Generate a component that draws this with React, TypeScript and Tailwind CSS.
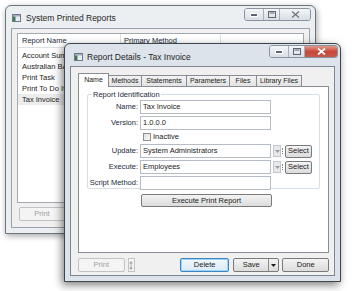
import React from "react";

const FONT = "font-['Liberation_Sans',Arial,sans-serif]";

function WinIcon() {
  return (
    <svg width="9" height="8" viewBox="0 0 9 8" className="shrink-0">
      <rect x="0.5" y="0.5" width="8" height="7" fill="#e9eef3" stroke="#6f7884" />
      <rect x="1" y="1" width="7" height="1.5" fill="#9fb0c2" />
      <rect x="1" y="2.5" width="2.5" height="4.5" fill="#3f7a5f" />
    </svg>
  );
}

function CaptionButtons({ active }: { active: boolean }) {
  return (
    <div className="flex h-[13px] rounded-[3px] border border-[#8a939e] overflow-hidden">
      <div className="w-[19px] flex items-center justify-center border-r border-[#a7afb9] bg-gradient-to-b from-[#f4f6f8] to-[#d8dee5]">
        <svg width="8" height="4" viewBox="0 0 8 4">
          <rect x="0.5" y="0.5" width="7" height="3" fill="#5d6573" stroke="#ffffff" />
        </svg>
      </div>
      <div className="w-[16px] flex items-center justify-center border-r border-[#a7afb9] bg-gradient-to-b from-[#f4f6f8] to-[#d8dee5]">
        <svg width="8" height="7" viewBox="0 0 8 7">
          <rect x="0.5" y="0.5" width="7" height="6" fill="none" stroke="#5d6573" />
          <rect x="1.5" y="1.5" width="5" height="1" fill="#5d6573" />
        </svg>
      </div>
      <div
        className={
          active
            ? "w-[32px] flex items-center justify-center bg-gradient-to-b from-[#e29a8c] via-[#c8473a] to-[#c2584a]"
            : "w-[30px] flex items-center justify-center bg-gradient-to-b from-[#f4f6f8] to-[#d8dee5]"
        }>
        <svg width="9" height="7" viewBox="0 0 9 7">
          <path
            d="M1 0.5 L8 6.5 M8 0.5 L1 6.5"
            stroke={active ? "#ffffff" : "#6d7583"}
            strokeWidth={active ? 1.8 : 1.2}
          />
        </svg>
      </div>
    </div>
  );
}

function Btn({
  children,
  className = "",
  disabled,
  focused,
}: {
  children: React.ReactNode;
  className?: string;
  disabled?: boolean;
  focused?: boolean;
}) {
  const base = "flex items-center justify-center rounded-[2px] border text-[7.5px] leading-none whitespace-nowrap";
  const look = disabled
    ? "border-[#c2c2c2] bg-[#f4f4f4] text-[#a0a0a0]"
    : focused
      ? "border-[#3c86c6] bg-gradient-to-b from-[#f2f8fd] to-[#d9eaf7] text-[#1b1b1b] shadow-[inset_0_0_0_1px_#9fd3f3]"
      : "border-[#7a7a7a] bg-gradient-to-b from-[#f3f3f3] to-[#dcdcdc] text-[#1b1b1b]";
  return <div className={`${base} ${look} ${className}`}>{children}</div>;
}

function Field({ value }: { value?: string }) {
  return (
    <div className="w-[131px] h-[14px] border border-[#b6bcc6] bg-white flex items-center px-[2px] text-[7.5px] text-[#1b1b1b]">
      {value}
    </div>
  );
}

function Label({ text }: { text: string }) {
  return <div className="w-[52px] pr-[2px] text-right text-[7.5px] text-[#1b2a3c] whitespace-nowrap">{text}</div>;
}

function PickRow({ label, value }: { label: string; value: string }) {
  return (
    <div className="flex items-center">
      <Label text={label} />
      <Field value={value} />
      <div className="ml-[2px] w-[8px] h-[12px] border border-[#c4c7cc] bg-[#e7e9ec] flex items-center justify-center">
        <svg width="5" height="3" viewBox="0 0 5 3">
          <path d="M0 0 L5 0 L2.5 3 Z" fill="#9a9ea5" />
        </svg>
      </div>
      <div className="mx-[1px] w-[1px] h-[6px] border-l border-dotted border-[#8a8a8a]" />
      <Btn className="ml-[1px] w-[27px] h-[13px]">Select</Btn>
    </div>
  );
}

function BackWindow() {
  const rows = ["Account Summary", "Australian BAS", "Print Task", "Print To Do Item", "Tax Invoice"];
  return (
    <div className="absolute left-[5px] top-[5px] w-[311px] h-[229px] rounded-t-[6px] border border-[#6e757e] bg-[#eceff2] shadow-[1px_2px_6px_rgba(0,0,0,0.35)] flex flex-col">
      <div className="h-[22px] flex items-start pl-[6px] pr-[4px]">
        <div className="flex items-center gap-[5px] pt-[6px]">
          <WinIcon />
          <span className="text-[8.5px] text-[#1e1e1e]">System Printed Reports</span>
        </div>
        <div className="ml-auto pt-[2px]">
          <CaptionButtons active={false} />
        </div>
      </div>
      <div className="mx-[5px] mb-[5px] flex-1 border border-[#9aa2ab] bg-[#f0f0f0] flex flex-col px-[5px] pt-[4px]">
        <div className="h-[170px] border border-[#a3a9b1] bg-white flex flex-col">
          <div className="flex h-[14px] items-center border-b border-[#dcdfe3] text-[7.5px] text-[#1b2a3c]">
            <div className="w-[103px] h-full flex items-center pl-[4px] border-r border-[#dcdfe3]">Report Name</div>
            <div className="w-[100px] h-full flex items-center pl-[3px] border-r border-[#dcdfe3]">Primary Method</div>
            <div className="flex-1" />
          </div>
          <div className="pt-[2px] flex flex-col">
            {rows.map((r) => (
              <div
                key={r}
                className={`h-[11px] flex items-center pl-[4px] text-[7.5px] text-[#1b1b1b] ${r === "Tax Invoice" ? "bg-[#ececec]" : ""}`}>
                {r}
              </div>
            ))}
          </div>
        </div>
        <div className="mt-[4px] pl-[2px]">
          <Btn disabled className="w-[46px] h-[14px]">Print</Btn>
        </div>
      </div>
    </div>
  );
}

function FrontWindow() {
  const tabs: [string, string][] = [
    ["Name", "w-[31px]"],
    ["Methods", "w-[34px]"],
    ["Statements", "w-[46px]"],
    ["Parameters", "w-[44px]"],
    ["Files", "w-[28px]"],
    ["Library Files", "w-[46px]"],
  ];
  return (
    <div className="absolute left-[64px] top-[43px] w-[277px] h-[239px] rounded-t-[6px] border border-[#3f454d] bg-[#dde3ea] shadow-[-2px_3px_8px_rgba(0,0,0,0.5)] flex flex-col">
      <div className="h-[22px] flex items-start pl-[9px] pr-[2px]">
        <div className="flex items-center gap-[4px] pt-[7px]">
          <WinIcon />
          <span className="text-[8.5px] text-[#1e1e1e]">Report Details - Tax Invoice</span>
        </div>
        <div className="ml-auto pt-[1px]">
          <CaptionButtons active />
        </div>
      </div>
      <div className="mx-[5px] mb-[5px] flex-1 border border-[#7e8791] bg-[#f0f0f0] flex flex-col pl-[7px] pr-[5px] pt-[5px]">
        <div className="flex items-end h-[14px]">
          {tabs.map(([t, w]) =>
            t === "Name" ? (
              <div
                key={t}
                className={`${w} h-[14px] -mb-[1px] z-10 flex items-center justify-center border border-b-0 border-[#898c95] bg-white text-[7px] text-[#1b1b1b] whitespace-nowrap`}>
                {t}
              </div>
            ) : (
              <div
                key={t}
                className={`${w} h-[11px] -ml-[1px] flex items-center justify-center border border-b-0 border-[#898c95] bg-gradient-to-b from-[#f2f2f2] to-[#e3e3e3] text-[7px] text-[#1b1b1b] whitespace-nowrap overflow-hidden`}>
                {t}
              </div>
            ),
          )}
        </div>
        <div className="h-[167px] border border-[#898c95] bg-white flex flex-col px-[8px] pt-[7px]">
          <div className="relative border border-[#d5dfe5] rounded-[2px] h-[95px] pt-[5px] flex flex-col gap-[2px]">
            <div className="absolute -top-[5px] left-[4px] px-[1px] bg-white text-[7.5px] leading-[9px] text-[#1b2a3c]">
              Report Identification
            </div>
            <div className="flex items-center">
              <Label text="Name:" />
              <Field value="Tax Invoice" />
            </div>
            <div className="flex items-center">
              <Label text="Version:" />
              <Field value="1.0.0.0" />
            </div>
            <div className="flex items-center h-[10px] pl-[55px] gap-[2px]">
              <div className="w-[8px] h-[8px] border border-[#8e8f8f] bg-gradient-to-br from-[#e0e0e0] to-[#fafafa]" />
              <span className="text-[7.5px] text-[#1b1b1b]">Inactive</span>
            </div>
            <PickRow label="Update:" value="System Administrators" />
            <PickRow label="Execute:" value="Employees" />
            <div className="flex items-center">
              <Label text="Script Method:" />
              <Field />
            </div>
          </div>
          <div className="pl-[54px] mt-[5px]">
            <Btn className="w-[131px] h-[13px]">Execute Print Report</Btn>
          </div>
        </div>
        <div className="flex items-center mt-[5px] h-[14px]">
          <Btn disabled className="w-[47px] h-[14px]">Print</Btn>
          <div className="ml-[3px] w-[8px] h-[14px] border border-[#c2c2c2] bg-[#f4f4f4] flex items-center justify-center">
            <svg width="4" height="9" viewBox="0 0 4 9">
              <path d="M2 0 L4 2.5 L0 2.5 Z M2 9 L4 6.5 L0 6.5 Z M1.5 2.5 H2.5 V6.5 H1.5 Z" fill="#a6a6a6" />
            </svg>
          </div>
          <Btn focused className="ml-[45px] w-[49px] h-[14px]">Delete</Btn>
          <div className="ml-[4px] w-[47px] h-[14px] flex rounded-[2px] border border-[#7a7a7a] bg-gradient-to-b from-[#f3f3f3] to-[#dcdcdc]">
            <div className="flex-1 flex items-center justify-center text-[7.5px] text-[#1b1b1b]">Save</div>
            <div className="w-[10px] border-l border-[#8a8a8a] flex items-center justify-center">
              <svg width="5" height="3" viewBox="0 0 5 3">
                <path d="M0 0 L5 0 L2.5 3 Z" fill="#1b1b1b" />
              </svg>
            </div>
          </div>
          <Btn className="ml-[3px] w-[47px] h-[14px]">Done</Btn>
        </div>
      </div>
    </div>
  );
}

export default function App() {
  return (
    <div className={`relative w-[352px] h-[291px] bg-white overflow-hidden ${FONT}`}>
      <BackWindow />
      <FrontWindow />
    </div>
  );
}
